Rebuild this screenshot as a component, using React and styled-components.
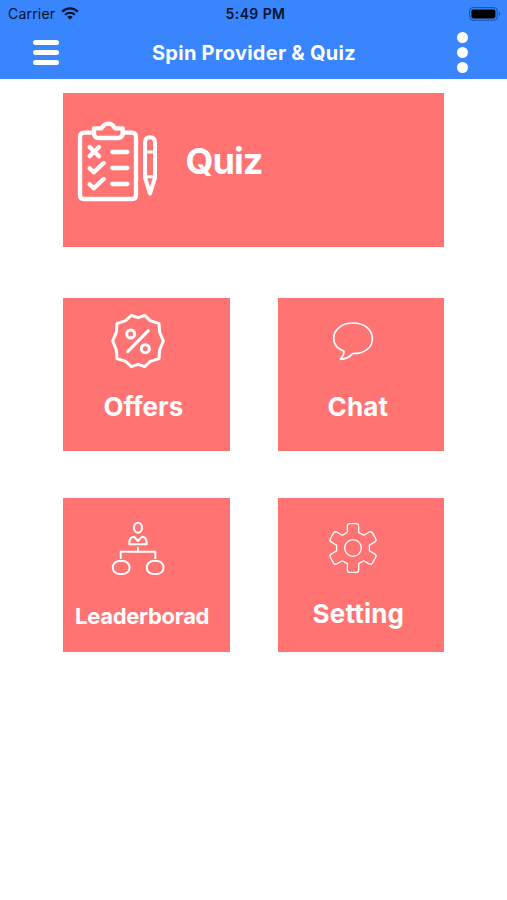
import styled, { createGlobalStyle } from "styled-components";

export default function App() {
  return (
    <>
      <GlobalStyle />
      <Screen>
        <Header>
          <StatusBar>
            <Carrier>
              <span>Carrier</span>
              <WifiIcon />
            </Carrier>
            <Time>5:49 PM</Time>
            <BatteryIcon />
          </StatusBar>
          <NavBar>
            <MenuButton aria-label="Menu">
              <MenuLine />
              <MenuLine />
              <MenuLine />
            </MenuButton>
            <Title>Spin Provider &amp; Quiz</Title>
            <MoreButton aria-label="More">
              <Dot />
              <Dot />
              <Dot />
            </MoreButton>
          </NavBar>
        </Header>
        <Menu>
          <QuizCard>
            <QuizIcon />
            <QuizLabel>Quiz</QuizLabel>
          </QuizCard>
          <Card>
            <IconBox $top={15} $left={47.5}>
              <OffersIcon />
            </IconBox>
            <Label $left={41} $top={96}>
              Offers
            </Label>
          </Card>
          <Card>
            <IconBox $top={23} $left={53}>
              <ChatIcon />
            </IconBox>
            <Label $left={50} $top={96} $spacing={0.15}>
              Chat
            </Label>
          </Card>
          <Card>
            <IconBox $top={23} $left={48}>
              <LeaderboardIcon />
            </IconBox>
            <Label $left={12.5} $top={107} $size={22} $spacing={-0.3}>
              Leaderborad
            </Label>
          </Card>
          <Card>
            <IconBox $top={24} $left={50}>
              <SettingIcon />
            </IconBox>
            <Label $left={35} $top={103} $spacing={0.2}>
              Setting
            </Label>
          </Card>
        </Menu>
      </Screen>
    </>
  );
}

function WifiIcon() {
  return (
    <svg width="18" height="13" viewBox="0 0 18 13" fill="none" stroke="#04122b">
      <path d="M1.2 4.7C5.6 .3 12.4 .3 16.8 4.7" strokeWidth="2.3" />
      <path d="M4.1 7.7C6.9 5 11.1 5 13.9 7.7" strokeWidth="2.1" />
      <path d="M9 12.6L6.3 9.9C7.8 8.5 10.2 8.5 11.7 9.9Z" fill="#04122b" stroke="none" />
    </svg>
  );
}

function BatteryIcon() {
  return (
    <svg width="33" height="14" viewBox="0 0 33 14">
      <rect x="0.6" y="0.6" width="27.6" height="12.6" rx="3.4" fill="none" stroke="#1d4f9f" strokeWidth="1" />
      <rect x="2.4" y="2.4" width="24" height="9" rx="1.8" fill="#000" />
      <path d="M29.8 4.8C31.5 5.5 31.5 8.3 29.8 9Z" fill="#1d4f9f" />
    </svg>
  );
}

function QuizIcon() {
  return (
    <svg
      width="82"
      height="82"
      viewBox="66 105 246 246"
      fill="none"
      stroke="#fff"
      strokeWidth="13"
      strokeLinecap="round"
      strokeLinejoin="round"
    >
      <path d="M113 143H88Q75 143 75 156V329Q75 342 88 342H230Q243 342 243 329V156Q243 143 230 143H207" />
      <path d="M117 130H139C143 130 143 116 160 116C177 116 177 130 181 130H203V144Q203 159 188 159H132Q117 159 117 144Z" />
      <path d="M104 186L132 214M132 186L104 214" />
      <path d="M104 250L116 262L146 234M104 298L116 310L146 282" />
      <path d="M172 201H217M172 249H217M172 297H217" />
      <path d="M270 278V173Q270 157 285 157Q300 157 300 173V278L285 326Z" strokeWidth="12" />
      <path d="M270 201H300M272 275H298" strokeWidth="9" />
    </svg>
  );
}

function OffersIcon() {
  return (
    <svg
      width="56"
      height="56"
      viewBox="61 69 168 168"
      fill="none"
      stroke="#fff"
      strokeWidth="9"
      strokeLinecap="round"
      strokeLinejoin="round"
    >
      <path d="M145 83L165 76L182 92L208 101L210 127L221 153L210 180L208 206L182 214L165 230L145 223L125 230L108 214L82 206L80 180L69 153L80 127L82 101L108 92L125 76Z" />
      <path d="M176 122L114 185" />
      <circle cx="123" cy="132" r="12" />
      <circle cx="167" cy="176" r="12" />
    </svg>
  );
}

function ChatIcon() {
  return (
    <svg width="44" height="40" viewBox="94 93 132 120" fill="none" stroke="#fff" strokeWidth="5" strokeLinejoin="round">
      <path d="M133 184C112 176 102 162 102 145C102 118 128 99 160 99C194 99 218 118 218 146C218 174 194 191 159 191C150 201 138 208 122 208C130 200 133 194 133 184Z" />
    </svg>
  );
}

function LeaderboardIcon() {
  return (
    <svg
      width="54"
      height="56"
      viewBox="168 93 162 168"
      fill="none"
      stroke="#fff"
      strokeWidth="6"
      strokeLinejoin="round"
    >
      <ellipse cx="249" cy="113" rx="12" ry="15" />
      <path d="M223 163V157Q224 141 237 140L249 153L261 140Q274 141 275 157V163Z" />
      <path d="M249 171V185M197 207V185H301V207" />
      <rect x="173.5" y="213" width="50" height="39" rx="19" />
      <rect x="275.5" y="213" width="50" height="39" rx="19" />
    </svg>
  );
}

function SettingIcon() {
  return (
    <svg width="50" height="52" viewBox="-75 -78 150 156" fill="none" stroke="#fff" strokeWidth="4" strokeLinejoin="round">
      {[0, 60, 120, 180, 240, 300].map((angle) => (
        <path
          key={angle}
          transform={`rotate(${angle})`}
          d="M-17 -47V-65Q-17 -73 -10 -73H10Q17 -73 17 -65V-47L32.2 -38.2"
        />
      ))}
      <circle r="25" />
    </svg>
  );
}

const GlobalStyle = createGlobalStyle`
  * {
    box-sizing: border-box;
  }
  body {
    margin: 0;
    background-color: #fff;
    font-family: Inter, "Liberation Sans", sans-serif;
  }
  svg {
    display: block;
    flex-shrink: 0;
  }
`;
const Screen = styled.div`
  min-height: 900px;
  background-color: #fff;
`;
const Header = styled.header`
  height: 79px;
  background-color: #3885fe;
`;
const StatusBar = styled.div`
  height: 27px;
  padding: 0 5px 0 8px;
  display: grid;
  grid-template-columns: 1fr auto 1fr;
  align-items: center;
  font-size: 14px;
  line-height: 27px;
  color: #04122b;

  > svg {
    justify-self: end;
  }
`;
const Carrier = styled.div`
  display: flex;
  align-items: center;
  gap: 6px;
  letter-spacing: 0.2px;
`;
const Time = styled.div`
  padding-left: 1px;
  font-weight: 600;
  letter-spacing: 0.4px;
`;
const NavBar = styled.div`
  height: 51px;
  padding: 0 39px 0 32.5px;
  display: flex;
  align-items: center;
`;
const MenuButton = styled.button`
  padding: 0;
  border: none;
  background: none;
  display: flex;
  flex-direction: column;
  gap: 5px;
`;
const MenuLine = styled.span`
  width: 26px;
  height: 5px;
  border-radius: 3px;
  background-color: #fff;
`;
const Title = styled.h1`
  margin: 0 auto 0 93.5px;
  font-weight: 700;
  font-size: 20px;
  line-height: 20px;
  letter-spacing: 0.26px;
  white-space: nowrap;
  color: #fff;
`;
const MoreButton = styled(MenuButton)`
  gap: 4px;
`;
const Dot = styled.span`
  width: 11px;
  height: 11px;
  border-radius: 50%;
  background-color: #fff;
`;
const Menu = styled.main`
  padding: 14px 0 0 62.5px;
  display: grid;
  grid-template-columns: 167.5px 166px;
  grid-template-rows: 158px 153.4px 154px;
  column-gap: 47.5px;
  row-gap: 46.8px;
`;
const Card = styled.div`
  background-color: #ff7473;
  color: #fff;
`;
const QuizCard = styled(Card)`
  grid-column: 1 / -1;
  margin-bottom: 4.5px;
  padding: 26.5px 0 0 14.5px;
  display: flex;
  align-items: flex-start;
`;
const IconBox = styled.div`
  height: 79px;
  padding: ${({ $top, $left }) => `${$top}px 0 0 ${$left}px`};
`;
const Label = styled.div`
  margin-top: ${({ $top }) => $top - 79}px;
  padding-left: ${({ $left }) => $left}px;
  font-weight: 700;
  font-size: ${({ $size = 26 }) => $size}px;
  line-height: 1;
  letter-spacing: ${({ $spacing = 0 }) => $spacing}px;
`;
const QuizLabel = styled.div`
  margin: 23px 0 0 26.5px;
  font-weight: 700;
  font-size: 36px;
  line-height: 1;
  letter-spacing: -1px;
`;
